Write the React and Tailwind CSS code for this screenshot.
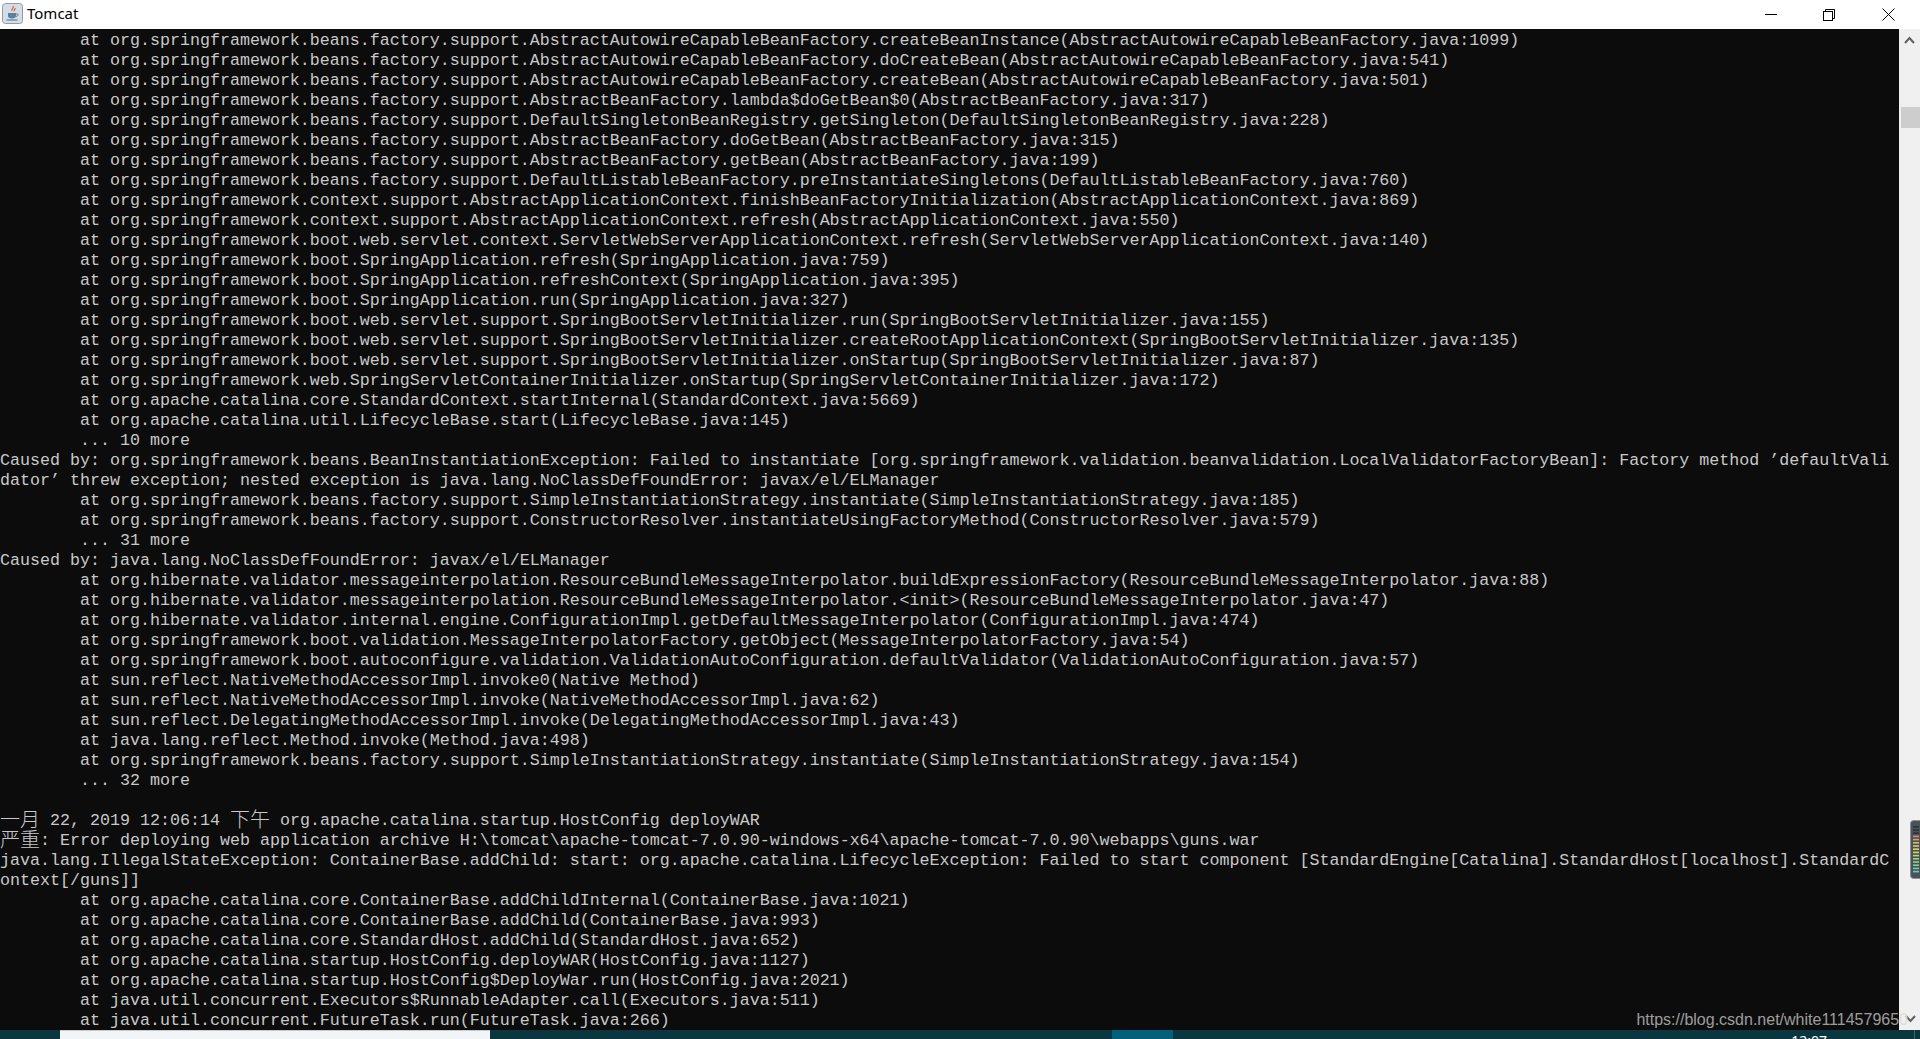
import { Fragment } from 'react'

const sf = 'at org.springframework.'
const bf = sf + 'beans.factory.support.'
const aa = 'AbstractAutowireCapableBeanFactory'
const sb = 'SpringBootServletInitializer'
const rbm = 'ResourceBundleMessageInterpolator'
const cat = 'at org.apache.catalina.'

const rows = [
  `\t${bf}${aa}.createBeanInstance(${aa}.java:1099)`,
  `\t${bf}${aa}.doCreateBean(${aa}.java:541)`,
  `\t${bf}${aa}.createBean(${aa}.java:501)`,
  `\t${bf}AbstractBeanFactory.lambda$doGetBean$0(AbstractBeanFactory.java:317)`,
  `\t${bf}DefaultSingletonBeanRegistry.getSingleton(DefaultSingletonBeanRegistry.java:228)`,
  `\t${bf}AbstractBeanFactory.doGetBean(AbstractBeanFactory.java:315)`,
  `\t${bf}AbstractBeanFactory.getBean(AbstractBeanFactory.java:199)`,
  `\t${bf}DefaultListableBeanFactory.preInstantiateSingletons(DefaultListableBeanFactory.java:760)`,
  `\t${sf}context.support.AbstractApplicationContext.finishBeanFactoryInitialization(AbstractApplicationContext.java:869)`,
  `\t${sf}context.support.AbstractApplicationContext.refresh(AbstractApplicationContext.java:550)`,
  `\t${sf}boot.web.servlet.context.ServletWebServerApplicationContext.refresh(ServletWebServerApplicationContext.java:140)`,
  `\t${sf}boot.SpringApplication.refresh(SpringApplication.java:759)`,
  `\t${sf}boot.SpringApplication.refreshContext(SpringApplication.java:395)`,
  `\t${sf}boot.SpringApplication.run(SpringApplication.java:327)`,
  `\t${sf}boot.web.servlet.support.${sb}.run(${sb}.java:155)`,
  `\t${sf}boot.web.servlet.support.${sb}.createRootApplicationContext(${sb}.java:135)`,
  `\t${sf}boot.web.servlet.support.${sb}.onStartup(${sb}.java:87)`,
  `\t${sf}web.SpringServletContainerInitializer.onStartup(SpringServletContainerInitializer.java:172)`,
  `\t${cat}core.StandardContext.startInternal(StandardContext.java:5669)`,
  `\t${cat}util.LifecycleBase.start(LifecycleBase.java:145)`,
  `\t... 10 more`,
  `Caused by: org.springframework.beans.BeanInstantiationException: Failed to instantiate [org.springframework.validation.beanvalidation.LocalValidatorFactoryBean]: Factory method ’defaultVali`,
  `dator’ threw exception; nested exception is java.lang.NoClassDefFoundError: javax/el/ELManager`,
  `\t${bf}SimpleInstantiationStrategy.instantiate(SimpleInstantiationStrategy.java:185)`,
  `\t${bf}ConstructorResolver.instantiateUsingFactoryMethod(ConstructorResolver.java:579)`,
  `\t... 31 more`,
  `Caused by: java.lang.NoClassDefFoundError: javax/el/ELManager`,
  `\tat org.hibernate.validator.messageinterpolation.${rbm}.buildExpressionFactory(${rbm}.java:88)`,
  `\tat org.hibernate.validator.messageinterpolation.${rbm}.<init>(${rbm}.java:47)`,
  `\tat org.hibernate.validator.internal.engine.ConfigurationImpl.getDefaultMessageInterpolator(ConfigurationImpl.java:474)`,
  `\t${sf}boot.validation.MessageInterpolatorFactory.getObject(MessageInterpolatorFactory.java:54)`,
  `\t${sf}boot.autoconfigure.validation.ValidationAutoConfiguration.defaultValidator(ValidationAutoConfiguration.java:57)`,
  `\tat sun.reflect.NativeMethodAccessorImpl.invoke0(Native Method)`,
  `\tat sun.reflect.NativeMethodAccessorImpl.invoke(NativeMethodAccessorImpl.java:62)`,
  `\tat sun.reflect.DelegatingMethodAccessorImpl.invoke(DelegatingMethodAccessorImpl.java:43)`,
  `\tat java.lang.reflect.Method.invoke(Method.java:498)`,
  `\t${bf}SimpleInstantiationStrategy.instantiate(SimpleInstantiationStrategy.java:154)`,
  `\t... 32 more`,
  ``,
  `一月 22, 2019 12:06:14 下午 org.apache.catalina.startup.HostConfig deployWAR`,
  `严重: Error deploying web application archive H:\\tomcat\\apache-tomcat-7.0.90-windows-x64\\apache-tomcat-7.0.90\\webapps\\guns.war`,
  `java.lang.IllegalStateException: ContainerBase.addChild: start: org.apache.catalina.LifecycleException: Failed to start component [StandardEngine[Catalina].StandardHost[localhost].StandardC`,
  `ontext[/guns]]`,
  `\t${cat}core.ContainerBase.addChildInternal(ContainerBase.java:1021)`,
  `\t${cat}core.ContainerBase.addChild(ContainerBase.java:993)`,
  `\t${cat}core.StandardHost.addChild(StandardHost.java:652)`,
  `\t${cat}startup.HostConfig.deployWAR(HostConfig.java:1127)`,
  `\t${cat}startup.HostConfig$DeployWar.run(HostConfig.java:2021)`,
  `\tat java.util.concurrent.Executors$RunnableAdapter.call(Executors.java:511)`,
  `\tat java.util.concurrent.FutureTask.run(FutureTask.java:266)`,
]

const stripes = ['#2f3338', '#2f3338', '#2f3338', '#d98a6c', '#d9a05f', '#dcb65a', '#dfc95c', '#dcd45e', '#cfd863', '#b9d86a', '#a3d672', '#8ed47f', '#7fd193', '#72cfa8', '#6bcdb9']

// CJK glyphs are twice the column width in the console font
function LogRow({ text }) {
  const parts = text.split(/([\u4e00-\u9fff]+)/)
  return (
    <div className="h-5 whitespace-pre">
      {parts.map((part, i) =>
        i % 2 === 1 ? (
          <span key={i} className="align-[-2px] font-['Noto_Sans_CJK_SC',sans-serif] text-[20px] font-light leading-[0]">{part}</span>
        ) : (
          <Fragment key={i}>{part}</Fragment>
        )
      )}
    </div>
  )
}

function JavaIcon() {
  return (
    <svg width="21" height="21" viewBox="0 0 21 21" fill="none">
      <rect x="0.5" y="0.5" width="20" height="20" rx="3" fill="#d5dde6" stroke="#8f9aa6" />
      <path d="M11 3c1.5 1.8-2 2.8-1 5M13 5c.8 1.2-1.4 1.8-.8 3.2" stroke="#d9622b" strokeWidth="1.2" />
      <path d="M6 10h8v3c0 1.5-1.5 2.5-4 2.5S6 14.500 6 13z" fill="#5c7f9e" />
      <path d="M14 11h1.500c1 0 1 2-1.500 2.500" stroke="#5c7f9e" />
      <path d="M4.500 17h11" stroke="#5c7f9e" strokeWidth="1.2" />
    </svg>
  )
}

export default function App() {
  return (
    <div className="relative flex h-screen flex-col overflow-hidden bg-[#0c0c0c]">
      {/* Title bar */}
      <div className="flex h-[29px] shrink-0 items-center bg-white">
        <div className="ml-[2px] mt-[-2px]">
          <JavaIcon />
        </div>
        <span className="ml-[4px] mt-[-2px] font-['Noto_Sans',sans-serif] text-[15px] text-black">Tomcat</span>
        <div className="ml-auto flex pr-[2px]">
          <button className="flex h-[27px] w-[58px] items-center justify-center">
            <svg width="12" height="12" viewBox="0 0 12 12" stroke="#000" fill="none"><path d="M0 5.500h12" /></svg>
          </button>
          <button className="flex h-[27px] w-[58px] items-center justify-center">
            <svg width="12" height="12" viewBox="0 0 12 12" stroke="#000" fill="none">
              <rect x="0.500" y="2.500" width="9" height="9" />
              <path d="M2.500 2.500v-2h9v9h-2" />
            </svg>
          </button>
          <button className="flex h-[27px] w-[60px] items-center justify-center">
            <svg width="13" height="13" viewBox="0 0 13 13" stroke="#000" fill="none"><path d="M0.500 0.500l12 12M12.500 0.500l-12 12" /></svg>
          </button>
        </div>
      </div>

      {/* Console + scrollbar */}
      <div className="flex min-h-0 flex-1">
        <div className="min-w-0 flex-1 overflow-hidden bg-[#0c0c0c] pt-[2px] font-['Liberation_Mono','Noto_Sans_CJK_SC',monospace] text-[16.667px] leading-5 text-[#c8c8c8] [tab-size:8]">
          {rows.map((row, i) => (
            <LogRow key={i} text={row} />
          ))}
        </div>
        <div className="flex w-[21px] shrink-0 flex-col items-center bg-[#f0f0f0]">
          <svg className="mt-[7px]" width="11" height="8" viewBox="0 0 11 8" fill="none" stroke="#606060" strokeWidth="2">
            <path d="M1 7l4.500-5 4.500 5" />
          </svg>
          <div className="ml-px mt-[63px] h-[21px] w-[19px] bg-[#cdcdcd]" />
          <svg className="ml-px mt-auto mb-[7px]" width="11" height="8" viewBox="0 0 11 8" fill="none" stroke="#606060" strokeWidth="2">
            <path d="M1 1l4.500 5 4.500-5" />
          </svg>
        </div>
      </div>

      {/* Taskbar, cut off by the bottom of the capture */}
      <div className="flex h-[9px] shrink-0 overflow-hidden bg-[#0b3640]">
        <div className="w-[60px]" />
        <div className="w-[430px] border-t border-[#c8cacb] bg-[#f2f5f7]" />
        <div className="w-[622px]" />
        <div className="w-[61px] bg-[#03607a]" />
        <div className="w-[654px] pt-[3px] font-['Noto_Sans',sans-serif] text-[14px] leading-4 text-white">
          <span className="block text-right">12:07</span>
        </div>
        <div className="ml-[87px] w-px bg-[#3d6470]" />
      </div>

      {/* Blog watermark stamped over the screenshot */}
      <div className="absolute bottom-[9px] right-[12px] font-['Liberation_Sans',sans-serif] text-[16px] leading-5 text-white/60">
        https://blog.csdn.net/white111457965<span className="text-[#dcdcdc]">0</span>
      </div>

      {/* Desktop widget poking in from the right edge */}
      <svg className="absolute right-0 top-[820px]" width="10" height="59" viewBox="0 0 10 59">
        <rect x="0.500" y="0.500" width="14" height="58" rx="3" fill="#4b5158" stroke="#8b9096" />
        {stripes.map((color, i) => (
          <rect key={i} x="3" y={6 + i * 3.2} width="6" height="1.600" fill={color} />
        ))}
      </svg>
    </div>
  )
}
